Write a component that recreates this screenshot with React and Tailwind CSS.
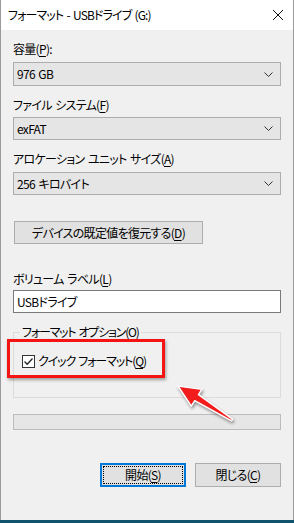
import React from 'react';

const font = "font-['Noto_Sans_CJK_JP','Noto_Sans',sans-serif] [font-feature-settings:'palt'] tracking-[-0.7px] [word-spacing:1.5px]";

// accelerator key, underlined like Windows dialogs
const Key = ({ children }) => <span className="underline underline-offset-[2px]">{children}</span>;

function Chevron() {
    return (
        <svg width="9" height="5" viewBox="0 0 9 5" className="shrink-0">
            <path d="M0.5 0.5 L4.5 4.5 L8.5 0.5" fill="none" stroke="#333" strokeWidth="1" />
        </svg>
    );
}

function Select({ value, height = 'h-[23px]' }) {
    return (
        <div className={`${height} flex items-center justify-between bg-[#e5e5e5] border border-[#adadad] pl-[3px] pr-[7px]`}>
            <span>{value}</span>
            <Chevron />
        </div>
    );
}

function Label({ children, className = '' }) {
    return <div className={`h-[14px] leading-[14px] ${className}`}>{children}</div>;
}

export default function App() {
    return (
        <div className={`relative w-[294px] h-[523px] bg-[#10536d] text-[12px] text-black ${font}`}>
            <div className="h-[520px] w-[294px] bg-[#f0f0f0] border-x border-[#9a9a9a] flex flex-col">
                {/* title bar */}
                <div className="h-[30px] bg-white flex items-center justify-between pl-[7px] pr-[9px]">
                    <span className="leading-none tracking-[-0.9px]">フォーマット - USBドライブ (G:)</span>
                    <svg width="12" height="12" viewBox="0 0 12 12">
                        <path d="M1 1 L11 11 M11 1 L1 11" stroke="#111" strokeWidth="1" />
                    </svg>
                </div>

                <div className="px-[12px] flex flex-col">
                    <Label className="mt-[12px]">容量(<Key>P</Key>):</Label>
                    <div className="mt-[6px]"><Select value="976 GB" height="h-[24px]" /></div>

                    <Label className="mt-[12px]">ファイル システム(<Key>F</Key>)</Label>
                    <div className="mt-[5px]"><Select value="exFAT" /></div>

                    <Label className="mt-[12px]">アロケーション ユニット サイズ(<Key>A</Key>)</Label>
                    <div className="mt-[6px]"><Select value="256 キロバイト" /></div>

                    <div className="mt-[26px] ml-px w-[189px] h-[23px] bg-[#e1e1e1] border border-[#adadad] flex items-center justify-center">
                        デバイスの既定値を復元する(<Key>D</Key>)
                    </div>

                    <Label className="mt-[28px]">ボリューム ラベル(<Key>L</Key>)</Label>
                    <div className="mt-[4px] h-[23px] bg-white border border-[#7a7a7a] flex items-center pl-[3px]">
                        USBドライブ
                    </div>

                    {/* format options group */}
                    <div className="relative mt-[19px] h-[66px] border border-[#dcdcdc] pt-[21px] pl-[8px]">
                        <span className="absolute -top-[8px] left-[6px] px-[2px] bg-[#f0f0f0] leading-[14px] tracking-[-1.2px]">
                            フォーマット オプション(<Key>O</Key>)
                        </span>
                        <div className="flex items-center gap-[3px]">
                            <div className="w-[13px] h-[13px] bg-white border border-[#333] flex items-center justify-center">
                                <svg width="11" height="11" viewBox="0 0 11 11">
                                    <path d="M1.5 5.5 L4.2 8.2 L9.5 2.5" fill="none" stroke="#222" strokeWidth="1.3" />
                                </svg>
                            </div>
                            <span className="leading-[14px] tracking-[-1.1px]">クイック フォーマット(<Key>Q</Key>)</span>
                        </div>
                    </div>

                    {/* progress */}
                    <div className="mt-[16px] h-[16px] bg-[#e6e6e6] border border-[#bcbcbc]" />

                    <div className="mt-[33px] flex justify-end gap-[9px]">
                        <div className="w-[86px] h-[24px] border-2 border-[#0078d7] bg-[#e1e1e1] p-px">
                            <div className="h-full border border-dotted border-black flex items-center justify-center">
                                開始(<Key>S</Key>)
                            </div>
                        </div>
                        <div className="w-[86px] h-[24px] border border-[#adadad] bg-[#e1e1e1] flex items-center justify-center">
                            閉じる(<Key>C</Key>)
                        </div>
                    </div>
                </div>
            </div>

            {/* annotation: red highlight */}
            <div className="absolute left-[7px] top-[339px] w-[158px] h-[39px] border-[3px] border-[#f41414] shadow-[1px_2px_3px_rgba(0,0,0,0.35)] pointer-events-none" />

            {/* annotation: red arrow */}
            <svg
                className="absolute left-[170px] top-[378px] pointer-events-none drop-shadow-[1px_2px_1.5px_rgba(0,0,0,0.4)]"
                width="70"
                height="50"
                viewBox="170 378 70 50"
            >
                <polygon
                    points="178,386 201.9,389.2 198.5,394.7 232.5,419.2 231.5,420.8 194.7,400.7 191.3,406.2"
                    fill="#f31c1c"
                    stroke="#fff"
                    strokeWidth="1.5"
                    strokeLinejoin="round"
                />
            </svg>
        </div>
    );
}
